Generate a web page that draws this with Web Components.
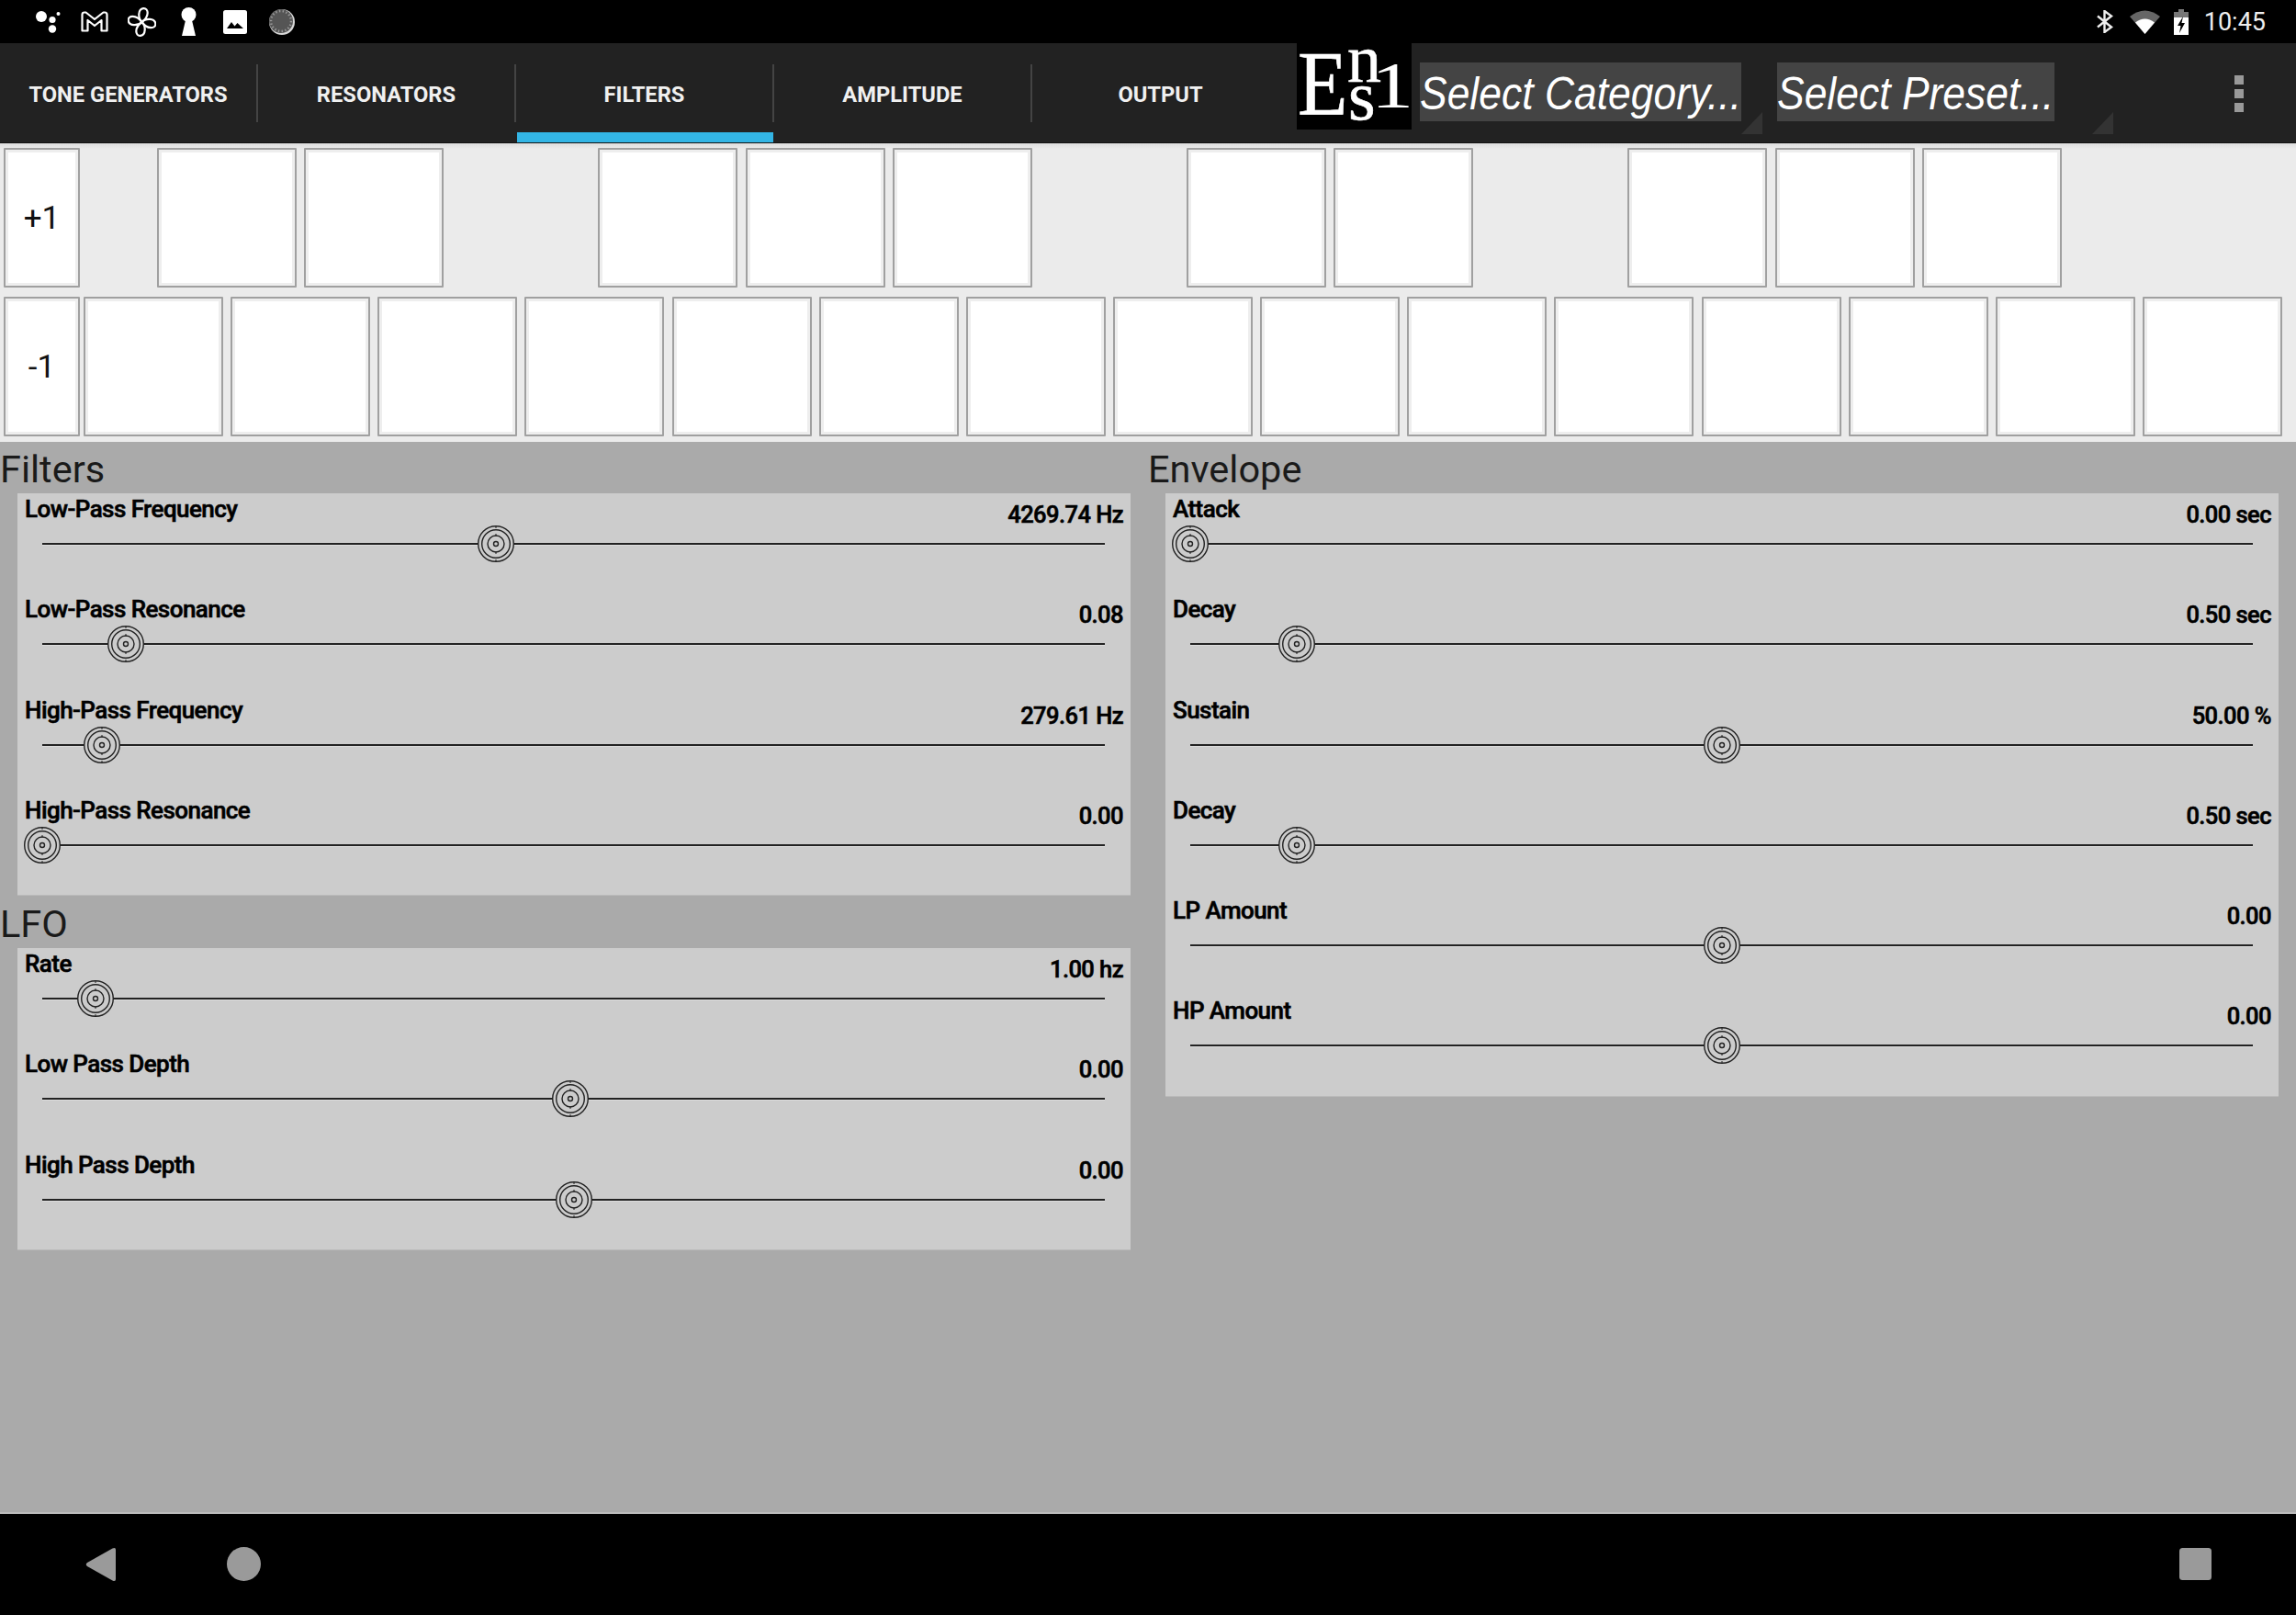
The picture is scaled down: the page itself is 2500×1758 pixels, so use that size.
<!doctype html>
<html>
<head>
<meta charset="utf-8">
<style>
  html, body { margin: 0; padding: 0; background: #aaa; }
  body { width: 2500px; height: 1758px; overflow: hidden; display: flex; flex-direction: column; font-family: Roboto, sans-serif; }
</style>
</head>
<body>
<status-bar></status-bar>
<tab-bar>
  <tab-item>TONE GENERATORS</tab-item>
  <tab-item>RESONATORS</tab-item>
  <tab-item selected>FILTERS</tab-item>
  <tab-item>AMPLITUDE</tab-item>
  <tab-item last>OUTPUT</tab-item>
  <ens-logo slot="extras"></ens-logo>
  <spin-select slot="extras" style="--box:350px;--arrow:23px">Select Category...</spin-select>
  <spin-select slot="extras" style="--box:302px;--arrow:64px;--gap:39px">Select Preset...</spin-select>
</tab-bar>
<key-board></key-board>
<main-area>
  <div slot="left">
    <param-panel heading="Filters">
      <param-slider label="Low-Pass Frequency" value="4269.74 Hz" pos="0.427"></param-slider>
      <param-slider label="Low-Pass Resonance" value="0.08" pos="0.079"></param-slider>
      <param-slider label="High-Pass Frequency" value="279.61 Hz" pos="0.056"></param-slider>
      <param-slider label="High-Pass Resonance" value="0.00" pos="0"></param-slider>
    </param-panel>
    <param-panel heading="LFO">
      <param-slider label="Rate" value="1.00 hz" pos="0.05"></param-slider>
      <param-slider label="Low Pass Depth" value="0.00" pos="0.497"></param-slider>
      <param-slider label="High Pass Depth" value="0.00" pos="0.5"></param-slider>
    </param-panel>
  </div>
  <div slot="right">
    <param-panel heading="Envelope">
      <param-slider label="Attack" value="0.00 sec" pos="0"></param-slider>
      <param-slider label="Decay" value="0.50 sec" pos="0.1"></param-slider>
      <param-slider label="Sustain" value="50.00 %" pos="0.5"></param-slider>
      <param-slider label="Decay" value="0.50 sec" pos="0.1"></param-slider>
      <param-slider label="LP Amount" value="0.00" pos="0.5"></param-slider>
      <param-slider label="HP Amount" value="0.00" pos="0.5"></param-slider>
    </param-panel>
  </div>
</main-area>
<nav-bar></nav-bar>

<script>
class StatusBar extends HTMLElement {
  constructor() {
    super();
    this.attachShadow({ mode: 'open' }).innerHTML = `
      <style>
        :host { display: flex; align-items: center; height: 47px; background: #000; flex: none; padding: 0 33px 0 39px; }
        svg { display: block; flex: none; }
        .spacer { flex: 1; }
        .clock { color: #eee; font: 400 27px Roboto, sans-serif; margin-left: 17px; }
      </style>
      <svg width="27" height="24" viewBox="0 0 27 24" style="margin-right:22px" fill="#fff">
        <circle cx="6" cy="6" r="6"/><circle cx="18" cy="9.5" r="3.6"/><circle cx="24.5" cy="3" r="2"/><circle cx="18" cy="19.5" r="4.2"/>
      </svg>
      <svg width="30" height="24" viewBox="0 0 30 24" style="margin-right:21px" fill="none" stroke="#fff" stroke-width="2.2" stroke-linejoin="round">
        <path d="M1.500 21.500V4q0-2.500 2.500-2.500h1.500L15 9l9.500-7.500H26q2.500 0 2.500 2.500v17.500h-6V10L15 16 7.500 10v11.500z"/>
      </svg>
      <svg width="31" height="32" viewBox="0 0 31 32" style="margin-right:27px" fill="none" stroke="#fff" stroke-width="2.2" stroke-linejoin="round">
        <path d="M15.500 16C11 12 11 2 17 1.200C23 .5 24 10 15.500 16z"/>
        <path d="M15.500 16C11 12 11 2 17 1.200C23 .5 24 10 15.500 16z" transform="rotate(90 15.500 16)"/>
        <path d="M15.500 16C11 12 11 2 17 1.200C23 .5 24 10 15.500 16z" transform="rotate(180 15.500 16)"/>
        <path d="M15.500 16C11 12 11 2 17 1.200C23 .5 24 10 15.500 16z" transform="rotate(270 15.500 16)"/>
      </svg>
      <svg width="17" height="31" viewBox="0 0 17 31" style="margin-right:29px" fill="#fff">
        <circle cx="8.500" cy="8" r="8"/><path d="M5.500 12 1 31H16L11.500 12z"/>
      </svg>
      <svg width="26" height="26" viewBox="0 0 26 26" style="margin-right:24px">
        <rect width="26" height="26" rx="2.500" fill="#fff"/>
        <path d="M4 20l5-7 3.500 4.500 3-3.500L22 20z" fill="#000"/>
      </svg>
      <svg width="28" height="28" viewBox="0 0 28 28">
        <circle cx="14" cy="14" r="14" fill="#d8d8d8"/>
        <circle cx="13" cy="13" r="13" fill="#555"/>
        <circle cx="13" cy="13" r="11" fill="none" stroke="#999" stroke-width="2.500" stroke-dasharray="1.400 2.400"/>
      </svg>
      <div class="spacer"></div>
      <svg width="18" height="25" viewBox="0 0 18 25" style="margin-right:18px" fill="none" stroke="#eee" stroke-width="2.400">
        <path d="M1 6.500 16 18.500 8.500 24V1L16 6.500 1 18.500"/>
      </svg>
      <svg width="33" height="27" viewBox="0 0 33 27" style="margin-right:15px">
        <path d="M16.500 27 0 8Q16.500 -5 33 8z" fill="#666"/>
        <path d="M16.500 27 6 14.500Q16.500 6.500 27 14.500z" fill="#fff"/>
      </svg>
      <svg width="16" height="28" viewBox="0 0 16 28">
        <path d="M5 0h6v3h5v25H0V3h5z" fill="#777"/>
        <path d="M0 9h16v19H0z" fill="#fff"/>
        <path d="M10 8 4 18h3.500L6 26l6-11H8.500z" fill="#000"/>
      </svg>
      <div class="clock">10:45</div>`;
  }
}

class TabBar extends HTMLElement {
  constructor() {
    super();
    this.attachShadow({ mode: 'open' }).innerHTML = `
      <style>
        :host { display: flex; height: 109px; background: #222; flex: none; box-sizing: border-box; position: relative; border-bottom: 1px solid #111; }
        .tabs { display: flex; flex: none; }
        .extras { display: flex; flex: none; margin-left: 7px; }
        .menu { position: absolute; left: 2433px; top: 35px; display: flex; flex-direction: column; gap: 5px; }
        .menu i { display: block; width: 10px; height: 10px; background: #999; }
      </style>
      <div class="tabs"><slot></slot></div>
      <div class="extras"><slot name="extras"></slot></div>
      <div class="menu"><i></i><i></i><i></i></div>`;
  }
}

class TabItem extends HTMLElement {
  constructor() {
    super();
    this.attachShadow({ mode: 'open' }).innerHTML = `
      <style>
        :host { display: flex; width: 281px; box-sizing: border-box; align-items: center; justify-content: center; position: relative;
                color: #f0f0f0; font: 700 23.700px Roboto, sans-serif; }
        :host(:not([last]))::after { content: ''; position: absolute; right: 0; top: 23px; width: 2px; height: 63px; background: #444; }
        :host([selected])::before { content: ''; position: absolute; left: 1px; right: 1px; bottom: 0; height: 11px; background: #33b5e5; }
        span { padding: 3px 2px 0 0; }
      </style>
      <span><slot></slot></span>`;
  }
}

class EnsLogo extends HTMLElement {
  constructor() {
    super();
    this.attachShadow({ mode: 'open' }).innerHTML = `
      <style>
        :host { display: block; flex: none; position: relative; width: 125px; height: 94px; background: #000;
                color: #fff; font-family: "Liberation Serif", serif; -webkit-text-stroke: .6px #fff; }
        span { position: absolute; transform-origin: 0 0; white-space: pre; }
        .e { left: 1px; top: 15px; font-size: 99px; line-height: 58px; transform: scaleX(.9); }
        .n { left: 55px; top: 0; font-size: 74px; line-height: 34px; }
        .s { left: 56px; top: 41px; font-size: 76px; line-height: 32px; }
        .one { left: 81px; top: 27px; font-size: 71px; line-height: 38px; transform: scaleX(1.3); -webkit-text-stroke: 0; }
      </style>
      <span class="e">E</span><span class="n">n</span><span class="s">s</span><span class="one">1</span>`;
  }
}

class SpinSelect extends HTMLElement {
  constructor() {
    super();
    this.attachShadow({ mode: 'open' }).innerHTML = `
      <style>
        :host { display: block; flex: none; position: relative; margin-left: var(--gap, 9px); margin-top: 21px; }
        .box { width: var(--box); height: 64px; background: #444; box-sizing: border-box; overflow: hidden; display: flex; align-items: center;
               color: #fff; font: italic 400 50px "Liberation Sans", sans-serif; white-space: nowrap; }
        span { display: block; transform-origin: 0 50%; transform: scaleX(.889); padding-top: 4px; }
        .arrow { position: absolute; left: calc(var(--box) + var(--arrow) - 23px); top: 54px; width: 23px; height: 24px; background: #333;
                 clip-path: polygon(100% 0, 100% 100%, 0 100%); }
      </style>
      <div class="box"><span><slot></slot></span></div>
      <div class="arrow"></div>`;
  }
}

class KeyBoard extends HTMLElement {
  constructor() {
    super();
    const top = [0, 1, 3, 4, 5, 7, 8, 10, 11, 12];
    let upper = '';
    for (let i = 0; i < 13; i++) upper += top.includes(i) ? '<button class="key"></button>' : '<div class="key gap"></div>';
    const lower = Array(15).fill('<button class="key"></button>').join('');
    this.attachShadow({ mode: 'open' }).innerHTML = `
      <style>
        :host { display: flex; flex-direction: column; gap: 10px; height: 325px; box-sizing: border-box; padding: 5px 0 0 4px; flex: none;
                background: linear-gradient(#dcdcdc, #ebebeb 6px); }
        .row { display: flex; align-items: flex-start; height: 152px; }
        .keys { display: flex; gap: 8.150px; }
        .key { width: 152px; height: 152px; box-sizing: border-box; padding: 0; background: #fff; border: 2px solid #a0a0a0; border-radius: 1px;
               box-shadow: inset 0 0 0 3px #eee; font: 400 35px Roboto, sans-serif; color: #111; display: flex; align-items: center; justify-content: center; }
        .key.gap { visibility: hidden; }
        .key.side { width: 83px; flex: none; }
        .top .side { margin-right: 84px; }
        .bottom .side { margin-right: 4px; }
      </style>
      <div class="row top"><button class="key side">+1</button><div class="keys">${upper}</div></div>
      <div class="row bottom"><button class="key side">-1</button><div class="keys">${lower}</div></div>`;
  }
}

class MainArea extends HTMLElement {
  constructor() {
    super();
    this.attachShadow({ mode: 'open' }).innerHTML = `
      <style>
        :host { display: grid; grid-template-columns: 1250px 1250px; flex: 1; background: #aaa; align-items: start; border-bottom: 2px solid #bbb; box-sizing: border-box; }
      </style>
      <slot name="left"></slot><slot name="right"></slot>`;
  }
}

class ParamPanel extends HTMLElement {
  constructor() {
    super();
    this.attachShadow({ mode: 'open' }).innerHTML = `
      <style>
        :host { display: block; margin-bottom: 2px; }
        h2 { margin: 0; height: 56px; box-sizing: border-box; padding: 7px 0 0 0; font: 400 41.500px/46px Roboto, sans-serif; color: #1a1a1a; }
        .panel { margin: 0 19px; width: 1212px; background: #ccc; box-shadow: 0 1px 0 #bbb; }
      </style>
      <h2></h2>
      <div class="panel"><slot></slot></div>`;
  }
  connectedCallback() { this.shadowRoot.querySelector('h2').textContent = this.getAttribute('heading'); }
}

class ParamSlider extends HTMLElement {
  constructor() {
    super();
    this.attachShadow({ mode: 'open' }).innerHTML = `
      <style>
        :host { display: block; height: 109.250px; box-sizing: border-box; padding: 0 8px; color: #000; }
        .head { display: flex; justify-content: space-between; height: 35px; font: 500 26px/34px Roboto, sans-serif; letter-spacing: -.55px; -webkit-text-stroke: .6px #000; }
        .value { padding-top: 6px; font-size: 25.500px; }
        .track { position: relative; height: 40px; margin: 0 20px 0 19px; }
        .track::before { content: ''; position: absolute; left: 0; right: 0; top: 19px; height: 2px; background: #222; box-shadow: 0 1px 0 #ddd; }
        svg { position: absolute; top: 0; margin-left: -20px; display: block; }
      </style>
      <div class="head"><span class="label"></span><span class="value"></span></div>
      <div class="track">
        <svg width="40" height="40" viewBox="0 0 40 40" fill="none" stroke="#222" stroke-width="1.400">
          <circle cx="20" cy="20" r="19.300" fill="#ccc"/><circle cx="20" cy="20" r="15.300"/><circle cx="20" cy="20" r="9"/><circle cx="20" cy="20" r="2.500"/>
          <path d="M20 0v3M20 37v3M20 9v3M20 28v3" stroke-width="1"/>
        </svg>
      </div>`;
  }
  connectedCallback() {
    const s = this.shadowRoot;
    s.querySelector('.label').textContent = this.getAttribute('label');
    s.querySelector('.value').textContent = this.getAttribute('value');
    s.querySelector('svg').style.left = (parseFloat(this.getAttribute('pos')) * 100) + '%';
  }
}

class NavBar extends HTMLElement {
  constructor() {
    super();
    this.attachShadow({ mode: 'open' }).innerHTML = `
      <style>
        :host { display: flex; align-items: center; height: 110px; background: #000; flex: none; padding-left: 93px; }
        svg { display: block; flex: none; }
      </style>
      <svg width="33" height="38" viewBox="0 0 33 38" style="margin-right:122px;margin-top:-1px">
        <path d="M29.500 1.500Q33 0 33 3V35Q33 38 29.500 36.500L2 21Q-.5 19 2 17z" fill="#9a9a9a"/>
      </svg>
      <svg width="37" height="37" viewBox="0 0 37 37" style="margin-top:-1px;margin-left:-1px"><circle cx="18.500" cy="18.500" r="18.500" fill="#9a9a9a"/></svg>
      <svg width="35" height="35" viewBox="0 0 35 35" style="margin-left:2089px;margin-top:-1px"><rect width="35" height="35" rx="3.500" fill="#9a9a9a"/></svg>`;
  }
}

customElements.define('status-bar', StatusBar);
customElements.define('tab-bar', TabBar);
customElements.define('tab-item', TabItem);
customElements.define('ens-logo', EnsLogo);
customElements.define('spin-select', SpinSelect);
customElements.define('key-board', KeyBoard);
customElements.define('main-area', MainArea);
customElements.define('param-panel', ParamPanel);
customElements.define('param-slider', ParamSlider);
customElements.define('nav-bar', NavBar);
</script>
</body>
</html>
